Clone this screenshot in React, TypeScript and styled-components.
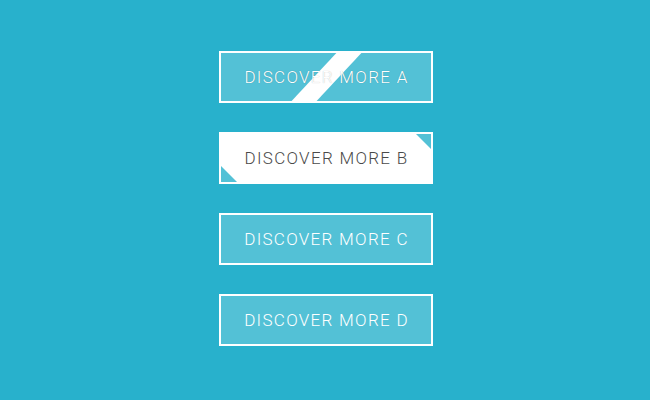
import React from 'react';
import styled, { createGlobalStyle, css } from 'styled-components';

const GlobalStyle = createGlobalStyle`
  html, body {
    margin: 0;
    padding: 0;
    background: #28b1cc;
  }
  body {
    font-family: Roboto, 'Liberation Sans', Arial, sans-serif;
  }
`;

const Page = styled.div`
  width: 650px;
  height: 400px;
  box-sizing: border-box;
  padding-top: 51px;
  display: flex;
  flex-direction: column;
  align-items: center;
  gap: 29px;
  background: #28b1cc;
`;

const Button = styled.button<{ $variant: 'a' | 'b' | 'c' | 'd' }>`
  position: relative;
  overflow: hidden;
  width: 214px;
  height: 52px;
  box-sizing: border-box;
  margin-left: 2px;
  border: 2px solid #fff;
  background: #53c1d6;
  color: #fff;
  font-family: Roboto, 'Liberation Sans', Arial, sans-serif;
  font-weight: 300;
  font-size: 17px;
  letter-spacing: 1.3px;
  text-transform: uppercase;
  padding: 0 0 0 1px;
  cursor: pointer;
  display: flex;
  align-items: center;
  justify-content: center;

  ${({ $variant }) =>
    $variant === 'b' &&
    css`
      background: #fff;
      color: #4a4a4a;
    `}
`;

const Label = styled.span<{ $shadow?: boolean }>`
  position: relative;
  z-index: 2;
  ${({ $shadow }) =>
    $shadow &&
    css`
      text-shadow: 0 0 1px rgba(0, 0, 0, 0.3);
    `}
`;

// diagonal white stripe sweeping across button A
const Stripe = styled.span`
  position: absolute;
  top: -4px;
  bottom: -4px;
  left: 93px;
  width: 25px;
  background: #fff;
  transform: skewX(-43deg);
  z-index: 1;
`;

const Corner = styled.span<{ $pos: 'tr' | 'bl' }>`
  position: absolute;
  width: 0;
  height: 0;
  ${({ $pos }) =>
    $pos === 'tr'
      ? css`
          top: 0;
          right: 0;
          border-top: 15px solid #53c1d6;
          border-left: 15px solid transparent;
        `
      : css`
          bottom: 0;
          left: 0;
          border-bottom: 16px solid #53c1d6;
          border-right: 16px solid transparent;
        `}
`;

const App: React.FC = () => {
  return (
    <>
      <GlobalStyle />
      <Page>
        <Button $variant="a">
          <Stripe />
          <Label $shadow>Discover More A</Label>
        </Button>
        <Button $variant="b">
          <Corner $pos="tr" />
          <Label>Discover More B</Label>
          <Corner $pos="bl" />
        </Button>
        <Button $variant="c">
          <Label>Discover More C</Label>
        </Button>
        <Button $variant="d">
          <Label>Discover More D</Label>
        </Button>
      </Page>
    </>
  );
};

export default App;
